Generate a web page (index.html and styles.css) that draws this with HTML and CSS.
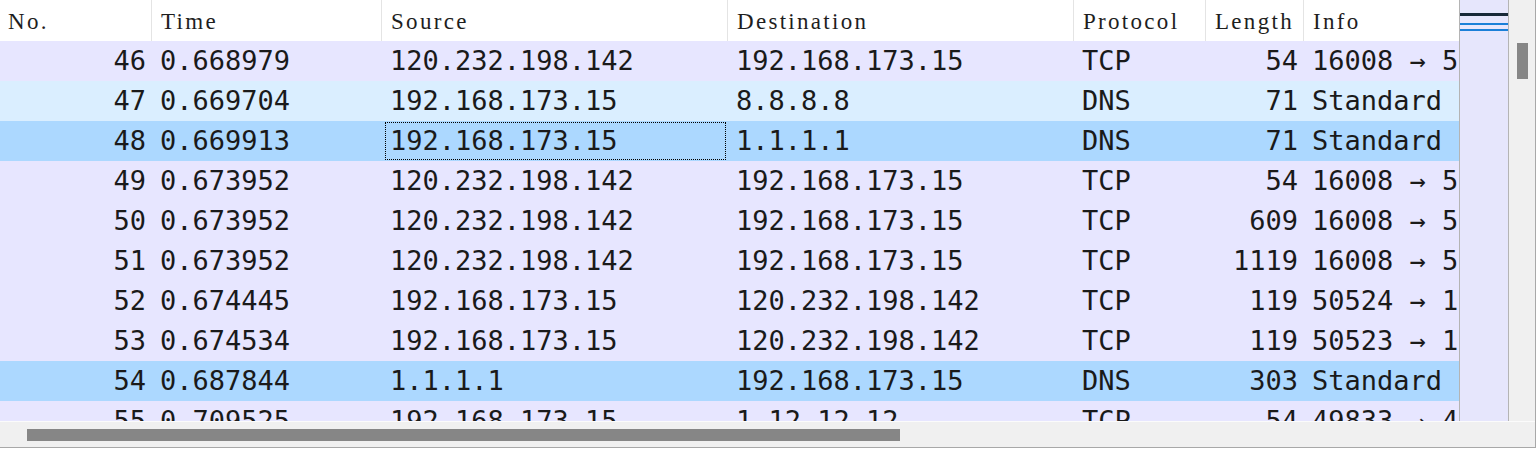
FILE: index.html
```html
<!DOCTYPE html>
<html>
<head>
<meta charset="utf-8">
<link rel="stylesheet" href="styles.css">
</head>
<body>
<div class="frame">
  <div class="main">
    <div class="table-view">
      <div class="row head">
        <div class="c">No.</div>
        <div class="c">Time</div>
        <div class="c">Source</div>
        <div class="c">Destination</div>
        <div class="c">Protocol</div>
        <div class="c">Length</div>
        <div class="c">Info</div>
      </div>
      <div class="row tcp"><div class="c num">46</div><div class="c">0.668979</div><div class="c">120.232.198.142</div><div class="c">192.168.173.15</div><div class="c">TCP</div><div class="c num">54</div><div class="c">16008 → 50524 [ACK] Seq=1 Ack=1</div></div>
      <div class="row dns"><div class="c num">47</div><div class="c">0.669704</div><div class="c">192.168.173.15</div><div class="c">8.8.8.8</div><div class="c">DNS</div><div class="c num">71</div><div class="c">Standard query</div></div>
      <div class="row sel"><div class="c num">48</div><div class="c">0.669913</div><div class="c focus">192.168.173.15</div><div class="c">1.1.1.1</div><div class="c">DNS</div><div class="c num">71</div><div class="c">Standard query</div></div>
      <div class="row tcp"><div class="c num">49</div><div class="c">0.673952</div><div class="c">120.232.198.142</div><div class="c">192.168.173.15</div><div class="c">TCP</div><div class="c num">54</div><div class="c">16008 → 50524 [ACK]</div></div>
      <div class="row tcp"><div class="c num">50</div><div class="c">0.673952</div><div class="c">120.232.198.142</div><div class="c">192.168.173.15</div><div class="c">TCP</div><div class="c num">609</div><div class="c">16008 → 50524 [PSH, ACK]</div></div>
      <div class="row tcp"><div class="c num">51</div><div class="c">0.673952</div><div class="c">120.232.198.142</div><div class="c">192.168.173.15</div><div class="c">TCP</div><div class="c num">1119</div><div class="c">16008 → 50523 [PSH, ACK]</div></div>
      <div class="row tcp"><div class="c num">52</div><div class="c">0.674445</div><div class="c">192.168.173.15</div><div class="c">120.232.198.142</div><div class="c">TCP</div><div class="c num">119</div><div class="c">50524 → 16008 [PSH, ACK]</div></div>
      <div class="row tcp"><div class="c num">53</div><div class="c">0.674534</div><div class="c">192.168.173.15</div><div class="c">120.232.198.142</div><div class="c">TCP</div><div class="c num">119</div><div class="c">50523 → 16008 [PSH, ACK]</div></div>
      <div class="row sel"><div class="c num">54</div><div class="c">0.687844</div><div class="c">1.1.1.1</div><div class="c">192.168.173.15</div><div class="c">DNS</div><div class="c num">303</div><div class="c">Standard query response</div></div>
      <div class="row tcp"><div class="c num">55</div><div class="c">0.709525</div><div class="c">192.168.173.15</div><div class="c">1.12.12.12</div><div class="c">TCP</div><div class="c num">54</div><div class="c">49833 → 443 [ACK]</div></div>
    </div>
    <div class="minimap">
      <div class="mark dark"></div>
      <div class="mark blue first"></div>
      <div class="mark blue"></div>
    </div>
    <div class="vscroll"><div class="vthumb"></div></div>
  </div>
  <div class="hscroll"><div class="hthumb"></div></div>
</div>
</body>
</html>
```

FILE: styles.css
```css
html, body {
  margin: 0;
  padding: 0;
  background: #ffffff;
}

.frame {
  width: 1535px;
  height: 447px;
  border-right: 1px solid #a8a8a8;
  border-bottom: 1px solid #a8a8a8;
  display: flex;
  flex-direction: column;
  background: #f0f0f0;
}

.main {
  display: flex;
  height: 421px;
  flex: none;
}

.table-view {
  width: 1459px;
  flex: none;
  overflow: hidden;
  background: #ffffff;
}

.row {
  display: grid;
  grid-template-columns: 152px 230px 346px 346px 132px 98px 600px;
  height: 40px;
  font-family: "DejaVu Sans Mono", monospace;
  font-size: 27px;
  line-height: 40px;
  color: #1a1a1a;
  white-space: nowrap;
}

.row.head {
  height: 41px;
  background: #ffffff;
  font-family: "Liberation Serif", serif;
  font-size: 23px;
  letter-spacing: 2.3px;
  line-height: 43px;
  color: #1e1e1e;
}

.row.head .c {
  padding-left: 9px;
  border-right: 1px solid #e4e4e4;
}

.row.head .c:first-child {
  padding-left: 8px;
}

.c {
  overflow: hidden;
  padding-left: 8px;
  position: relative;
}

.c.num {
  text-align: right;
  padding-left: 0;
  padding-right: 6px;
}

.tcp { background: #e7e6ff; }
.dns { background: #daeeff; }
.sel { background: #acd8ff; }

.c.focus::after {
  content: "";
  position: absolute;
  left: 3px;
  right: 2px;
  top: 1px;
  bottom: 1px;
  border: 1px dotted #000000;
}

.minimap {
  width: 48px;
  height: 420px;
  flex: none;
  background: #e6e6fc;
  border-left: 1px solid #b4b4b4;
  border-right: 1px solid #b4b4b4;
  border-bottom: 1px solid #b4b4b4;
  display: flex;
  flex-direction: column;
  padding-top: 13px;
}

.mark {
  height: 2px;
  flex: none;
}

.mark.dark {
  height: 3px;
  background: #172838;
}

.mark.blue {
  background: #1a7fd8;
  margin-top: 4px;
}

.mark.blue.first {
  margin-top: 7px;
}

.vscroll {
  flex: 1;
  background: #f0f0f0;
  padding: 43px 0 0 8px;
}

.vthumb {
  width: 11px;
  height: 36px;
  background: #868686;
}

.hscroll {
  flex: 1;
  border-top: 1px solid #fbfbfb;
  background: #f0f0f0;
  padding: 7px 0 0 27px;
}

.hthumb {
  width: 873px;
  height: 12px;
  background: #868686;
}
```
